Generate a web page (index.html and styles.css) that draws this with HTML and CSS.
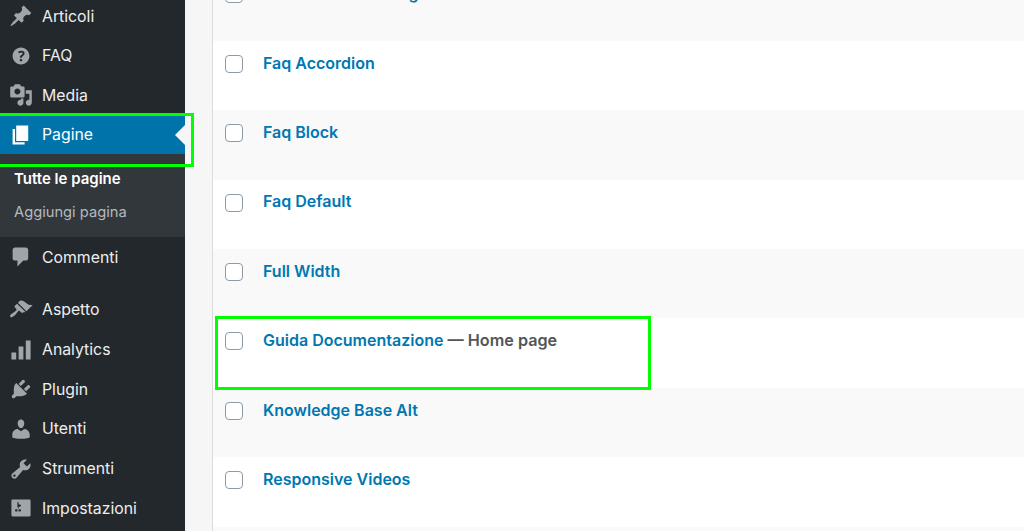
FILE: index.html
```html
<!DOCTYPE html>
<html lang="en">
<head>
    <meta charset="UTF-8">
    <title>Pagine</title>
    <link rel="stylesheet" href="styles.css">
</head>
<body>
    <div class="wrap">
        <nav class="sidebar">
            <ul class="menu">
                <li class="menu-item"><svg class="icon" viewBox="0 0 20 20"><path d="M10.44 3.02l1.82-1.82 6.36 6.35-1.83 1.82c-1.05-.68-2.48-.57-3.41.36l-.75.75c-.92.93-1.04 2.35-.35 3.41l-1.83 1.82-2.41-2.41-2.8 2.79c-.42.42-3.38 2.71-3.8 2.29s1.86-3.39 2.28-3.81l2.79-2.79L4.1 9.36l1.83-1.82c1.05.69 2.48.57 3.4-.36l.75-.75c.93-.92 1.05-2.35.36-3.41z"/></svg>Articoli</li>
                <li class="menu-item"><svg class="icon" viewBox="0 0 20 20"><path d="M17 10c0-3.87-3.14-7-7-7-3.87 0-7 3.13-7 7s3.13 7 7 7c3.86 0 7-3.13 7-7zm-6.3 1.48H9.14v-.43c0-.38.08-.7.24-.98s.46-.57.88-.89c.41-.29.68-.53.81-.71.14-.18.2-.39.2-.62 0-.25-.09-.44-.28-.58-.19-.13-.45-.19-.79-.19-.58 0-1.25.19-2 .57l-.64-1.28c.87-.49 1.8-.74 2.77-.74.81 0 1.45.2 1.92.58.48.39.71.91.71 1.55 0 .43-.09.8-.29 1.11-.19.32-.57.67-1.11 1.06-.38.28-.61.49-.71.63-.1.15-.15.34-.15.57v.35zm-1.47 2.74c-.18-.17-.27-.42-.27-.73 0-.33.08-.58.26-.75s.43-.25.77-.25c.32 0 .57.09.75.26s.27.42.27.74c0 .3-.09.55-.27.72-.18.18-.43.27-.75.27-.33 0-.58-.09-.76-.26z"/></svg>FAQ</li>
                <li class="menu-item"><svg class="icon" viewBox="0 0 20 20"><path d="M13 11V4c0-.55-.45-1-1-1h-1.67L9 1H5L3.67 3H2c-.55 0-1 .45-1 1v7c0 .55.45 1 1 1h10c.55 0 1-.45 1-1zM7 4.5c1.38 0 2.5 1.12 2.5 2.5S8.38 9.5 7 9.5 4.5 8.38 4.5 7 5.62 4.5 7 4.5zM14 6h5v10.5c0 1.38-1.12 2.5-2.5 2.5S14 17.88 14 16.5s1.12-2.5 2.5-2.5c.17 0 .34.02.5.05V9h-3V6zm-4 8.05V13h2v3.5c0 1.38-1.12 2.5-2.5 2.5S7 17.88 7 16.5 8.12 14 9.5 14c.17 0 .34.02.5.05z"/></svg>Media</li>
                <li class="menu-item current"><svg class="icon" viewBox="0 0 20 20"><path d="M6 15V2h10v13H6zm-1 1h8v2H3V5h2v11z"/></svg>Pagine</li>
                <li class="submenu">
                    <a class="submenu-link active" href="#">Tutte le pagine</a>
                    <a class="submenu-link" href="#">Aggiungi pagina</a>
                </li>
                <li class="menu-item"><svg class="icon" viewBox="0 0 20 20"><path d="M5 2h9c1.1 0 2 .9 2 2v7c0 1.1-.9 2-2 2h-2l-5 5v-5H5c-1.1 0-2-.9-2-2V4c0-1.1.9-2 2-2z"/></svg>Commenti</li>
                <li class="menu-item spaced"><svg class="icon" viewBox="0 0 20 20"><path d="M14.48 11.06L7.41 3.99l1.5-1.5c.5-.56 2.3-.47 3.51.32 1.21.8 1.43 1.28 2.91 2.1 1.18.64 2.45 1.26 4.45.85zm-.71.71L6.7 4.7 4.93 6.47c-.39.39-.39 1.02 0 1.41l1.06 1.06c.39.39.39 1.03 0 1.42-.6.6-1.43 1.11-2.21 1.69-.35.26-.7.53-1.01.84C1.43 13.23.4 14.98 1.2 15.8c.8.81 2.57-.23 3.91-1.57.31-.31.58-.66.85-1.02.58-.78 1.08-1.6 1.69-2.21.39-.39 1.02-.39 1.41 0l1.06 1.06c.39.39 1.02.39 1.41 0z"/></svg>Aspetto</li>
                <li class="menu-item"><svg class="icon" viewBox="0 0 20 20"><path d="M18 18V2h-4v16h4zm-6 0V7H8v11h4zm-6 0v-6H2v6h4z"/></svg>Analytics</li>
                <li class="menu-item"><svg class="icon" viewBox="0 0 20 20"><path d="M13.11 4.36L9.87 7.6 8 5.73l3.24-3.24c.35-.34 1.05-.2 1.56.32.52.51.66 1.21.31 1.55zm-8 1.77l.91-1.12 9.01 9.01-1.19.84c-.71.71-2.63 1.16-3.82 1.16H6.14L4.9 17.26c-.59.59-1.54.59-2.12 0-.59-.58-.59-1.53 0-2.12l1.24-1.24v-3.88c0-1.13.4-3.19 1.09-3.89zm7.26 3.97l3.24-3.24c.34-.35 1.04-.21 1.55.31.52.51.66 1.21.31 1.55l-3.24 3.25z"/></svg>Plugin</li>
                <li class="menu-item"><svg class="icon" viewBox="0 0 20 20"><path d="M10 9.25c-2.27 0-2.73-3.44-2.73-3.44C7 4.02 7.82 2 9.97 2c2.16 0 2.98 2.02 2.71 3.81 0 0-.41 3.44-2.68 3.44zm0 2.57L12.72 10c2.39 0 4.52 2.33 4.52 4.53v2.49s-3.65 1.13-7.24 1.13c-3.65 0-7.24-1.13-7.24-1.13v-2.49c0-2.25 1.94-4.48 4.47-4.48z"/></svg>Utenti</li>
                <li class="menu-item"><svg class="icon" viewBox="0 0 20 20"><path d="M16.68 9.77c-1.34 1.34-3.3 1.67-4.95.99l-5.41 6.52c-.99.99-2.59.99-3.58 0s-.99-2.59 0-3.57l6.52-5.42c-.68-1.65-.35-3.61.99-4.95 1.28-1.28 3.12-1.62 4.72-1.06l-2.89 2.89 2.82 2.82 2.86-2.87c.53 1.58.18 3.39-1.08 4.65zM3.81 16.21c.4.39 1.04.39 1.43 0 .4-.4.4-1.04 0-1.43-.39-.4-1.03-.4-1.43 0-.39.39-.39 1.03 0 1.43z"/></svg>Strumenti</li>
                <li class="menu-item"><svg class="icon" viewBox="0 0 20 20"><path d="M18 16V4c0-.55-.45-1-1-1H3c-.55 0-1 .45-1 1v12c0 .55.45 1 1 1h14c.55 0 1-.45 1-1zM8 11h1c.55 0 1 .45 1 1s-.45 1-1 1H8v1.5c0 .28-.22.5-.5.5s-.5-.22-.5-.5V13H6c-.55 0-1-.45-1-1s.45-1 1-1h1V5.5c0-.28.22-.5.5-.5s.5.22.5.5V7h1c.55 0 1 .45 1 1s-.45 1-1 1h-1v5.5c0 .28-.22.5-.5.5s-.5-.22-.5-.5V9z"/></svg>Impostazioni</li>
            </ul>
        </nav>
        <main class="content">
            <div class="pages">
                <div class="row alt"><span class="check"></span><a class="title" href="#">Documentation Lingua</a></div>
                <div class="row"><span class="check"></span><a class="title" href="#">Faq Accordion</a></div>
                <div class="row alt"><span class="check"></span><a class="title" href="#">Faq Block</a></div>
                <div class="row"><span class="check"></span><a class="title" href="#">Faq Default</a></div>
                <div class="row alt"><span class="check"></span><a class="title" href="#">Full Width</a></div>
                <div class="row"><span class="check"></span><a class="title" href="#">Guida Documentazione</a><span class="state"> — Home page</span></div>
                <div class="row alt"><span class="check"></span><a class="title" href="#">Knowledge Base Alt</a></div>
                <div class="row"><span class="check"></span><a class="title" href="#">Responsive Videos</a></div>
                <div class="row alt"></div>
            </div>
        </main>
    </div>
    <div class="mark mark-menu"></div>
    <div class="mark mark-row"></div>
</body>
</html>
```

FILE: styles.css
```css
html, body {
    height: 531px;
    margin: 0;
    overflow: hidden;
}

body {
    font-family: Inter, "Noto Sans", sans-serif;
    background-color: #f6f6f6;
    position: relative;
}

.wrap {
    display: flex;
    height: 531px;
}

/* sidebar */
.sidebar {
    width: 185px;
    flex-shrink: 0;
    background-color: #23282d;
}

.menu {
    list-style: none;
    margin: -3.5px 0 0;
    padding: 0;
}

.menu-item {
    display: flex;
    align-items: center;
    height: 39.6px;
    padding-left: 9px;
    font-size: 15.8px;
    color: #eeeeee;
}

.menu-item.spaced {
    height: 40.6px;
    margin-top: 12.4px;
}

.icon {
    width: 24px;
    height: 24px;
    margin-right: 9px;
    flex-shrink: 0;
    fill: #a0a5aa;
}

.menu-item.current {
    position: relative;
    height: 39.1px;
    background-color: #0073aa;
    color: #ffffff;
}

.menu-item.current .icon {
    fill: #ffffff;
}

.menu-item.current::after {
    content: "";
    position: absolute;
    right: 0;
    top: 10px;
    border: 10px solid transparent;
    border-left-width: 0;
    border-right-color: #f6f6f6;
}

.submenu {
    display: flex;
    flex-direction: column;
    gap: 15px;
    height: 83px;
    box-sizing: border-box;
    padding: 15px 0 0 14px;
    background-color: #32373c;
}

.submenu-link {
    font-size: 14.7px;
    line-height: 19px;
    color: #b4b9be;
    text-decoration: none;
}

.submenu-link.active {
    color: #ffffff;
    font-size: 15px;
    font-weight: 600;
}

/* page list */
.content {
    flex: 1;
    margin-left: 27px;
    border-left: 1px solid #dcdcdc;
    overflow: hidden;
}

.pages {
    margin-top: -28.6px;
}

.row {
    display: flex;
    align-items: flex-start;
    height: 69.4px;
    box-sizing: border-box;
    padding: 14px 0 0 12px;
    background-color: #ffffff;
    font-size: 16px;
    line-height: 20px;
}

.row.alt {
    background-color: #f9f9f9;
}

.check {
    width: 18px;
    height: 18px;
    box-sizing: border-box;
    margin-right: 20px;
    background-color: #ffffff;
    border: 1.5px solid #8f9aa6;
    border-radius: 4px;
}

.title {
    margin-top: -2.25px;
    color: #0077b0;
    font-weight: 600;
    text-decoration: none;
}

.state {
    margin-top: -2.25px;
    color: #555555;
    font-size: 16.2px;
    font-weight: 600;
    white-space: pre;
}

/* green annotation boxes */
.mark {
    position: absolute;
    box-sizing: border-box;
    border: 3px solid #00ff00;
}

.mark-menu {
    left: -4px;
    top: 113px;
    width: 198px;
    height: 54px;
}

.mark-row {
    left: 215px;
    top: 316px;
    width: 436px;
    height: 74px;
}
```
